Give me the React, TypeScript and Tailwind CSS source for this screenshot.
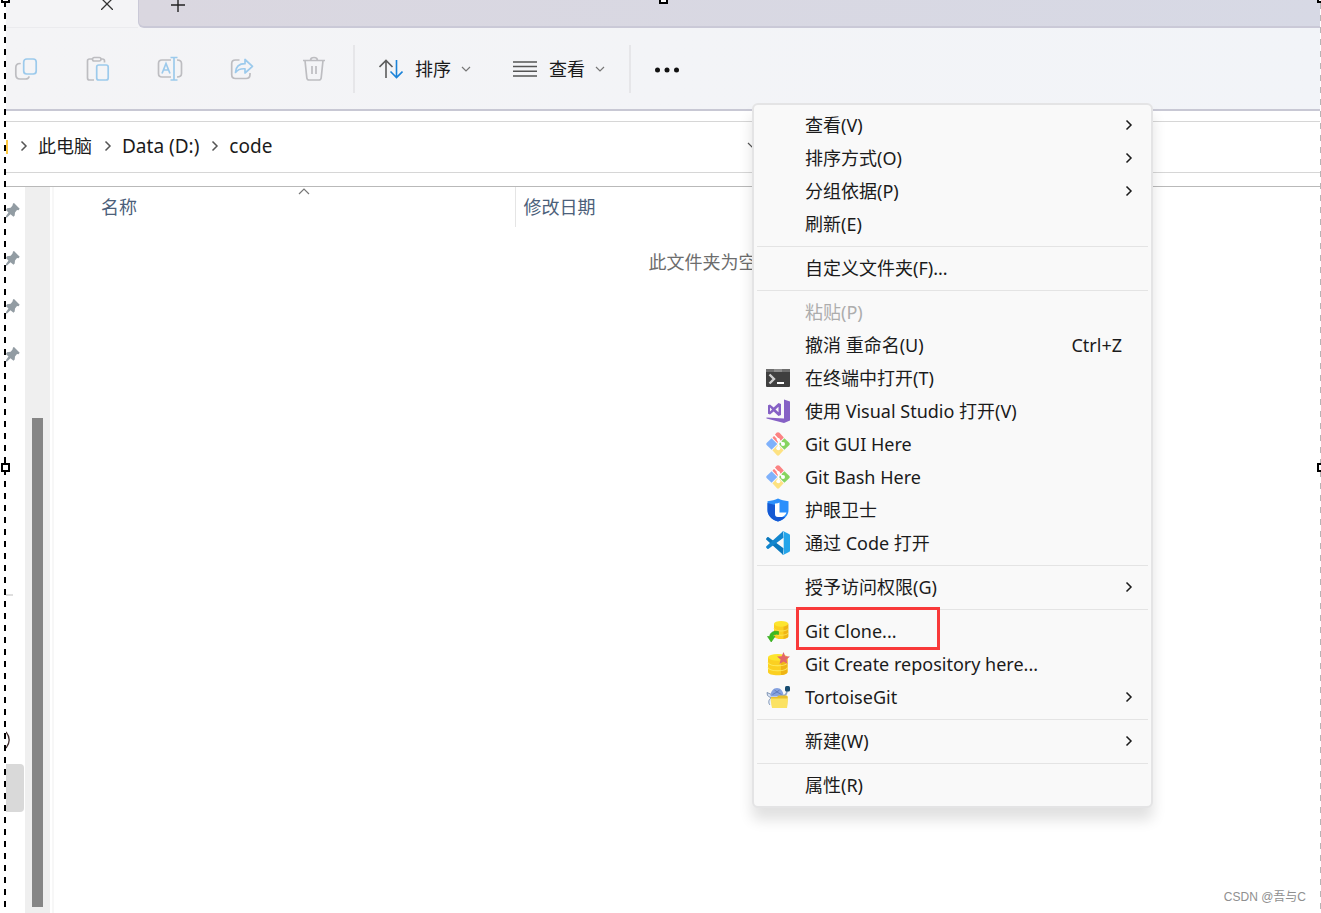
import type { ReactNode } from "react";

type MenuEntry = {
  label?: string;
  icon?: ReactNode;
  shortcut?: string;
  submenu?: boolean;
  disabled?: boolean;
  marked?: boolean;
};

function Chevron({ className }: { className?: string }) {
  return (
    <svg viewBox="0 0 8 12" className={className} fill="none" stroke="currentColor" strokeWidth="1.5">
      <path d="M1.5 1.5 6 6l-4.5 4.5" />
    </svg>
  );
}

function ChevronDown({ className }: { className?: string }) {
  return (
    <svg viewBox="0 0 10 6" className={className} fill="none" stroke="currentColor" strokeWidth="1.2">
      <path d="M1 1l4 4 4-4" />
    </svg>
  );
}

// Toolbar icons
const copyIcon = (
  <svg viewBox="0 0 26 26" className="size-[26px]" fill="none" strokeWidth="1.7" strokeLinecap="round">
    <path d="M7 7.5C4 7.5 2.8 9 2.8 11.500v7C2.800 21.500 4.500 23 7 23h5.500c2 0 3-.6 3.500-2" stroke="#bdbdc1" />
    <rect x="10.7" y="3" width="12.5" height="15" rx="3" stroke="#9ccaec" />
  </svg>
);

const pasteIcon = (
  <svg viewBox="0 0 26 26" className="size-[26px]" fill="none" strokeWidth="1.7">
    <path d="M9 24H4.500c-1.200 0-2-.8-2-2V5c0-1.200.8-2 2-2H7M16 3h1.500c1.200 0 2 .8 2 2v1.500" stroke="#bdbdc1" />
    <rect x="7.500" y="1.5" width="8.500" height="3.5" rx="1.700" stroke="#bdbdc1" />
    <rect x="11.7" y="9" width="11.5" height="15" rx="2" stroke="#9ccaec" />
  </svg>
);

const renameIcon = (
  <svg viewBox="0 0 26 26" className="size-[26px]" fill="none" strokeWidth="1.7">
    <path d="M14 4H5C2.500 4 1.500 5.500 1.500 7.500v10C1.500 19.500 2.500 21 5 21h9M20 4c3 0 4.500 1 4.500 3.500v10C24.500 20 23 21 20 21" stroke="#bdbdc1" />
    <path d="M17 1.500V24M13.500 1.500h7M13.500 24h7M5 17.500l4-10 4 10M6.500 14h5" stroke="#9ccaec" />
  </svg>
);

const shareIcon = (
  <svg viewBox="0 0 26 26" className="size-[26px]" fill="none" strokeWidth="1.7" strokeLinejoin="round">
    <path d="M10.500 4H6.500C4 4 2.700 5.300 2.700 7.500v11c0 2.300 1.300 4 3.800 4H17c2.500 0 4-1.500 4-4V17" stroke="#bdbdc1" />
    <path d="M16 3.500v4.200C10 7.700 6.800 11 6.500 16.500c2.500-3.300 5.500-4 9.500-3.700v4.200l7.500-6.700z" stroke="#9ccaec" />
  </svg>
);

const trashIcon = (
  <svg viewBox="0 0 26 26" className="size-[26px]" fill="none" stroke="#bdbdc1" strokeWidth="1.7">
    <path d="M2 4.500h22M9.500 4.500c0-2 1.300-3 3.500-3s3.500 1 3.500 3M4 4.500l1.800 17.200c.1 1.400 1 2.300 2.400 2.300h9.600c1.400 0 2.300-.9 2.400-2.300L22 4.500M11 10v8M15 10v8" />
  </svg>
);

// Context menu icons
const terminalIcon = (
  <svg viewBox="0 0 24 18" className="h-[18px] w-6">
    <rect width="24" height="18" rx="1" fill="#3f3f3f" />
    <path d="M1 0h22c.6 0 1 .4 1 1v2H0V1c0-.6.4-1 1-1z" fill="#6d6d6d" />
    <path d="M8 0h8v3H8z" fill="#8b8b8b" />
    <path d="M3.500 5.500 8 10l-4.500 4.500" fill="none" stroke="#cfcfcf" strokeWidth="2.4" />
    <path d="M11 14h7" stroke="#fff" strokeWidth="2" />
  </svg>
);

const visualStudioIcon = (
  <svg viewBox="0 0 24 24" className="size-6">
    <path d="M18 .5 24 2.500v19L18 24 .5 19.500v-1l17.500 1z" fill="#8661c5" />
    <path
      d="M12.500 4 15 5v11l-2.500 1-4.800-4.400L4 15.500l-2-.8V6.300l2-.8 3.700 2.900zM4 8.500v4l2-2zm8.500-.7L9.500 10.500l3 2.700z"
      fill="#8661c5"
      fillRule="evenodd"
    />
  </svg>
);

const gitIcon = (
  <svg viewBox="0 0 24 24" className="size-6">
    <path d="M12 .2c.6 0 1 .2 1.500.6l4.300 4.700L12 11.500 6.500 5.700l4-4.900c.5-.4.900-.6 1.500-.6z" fill="#fb8383" />
    <path d="M5.600 6.200 11.300 12l-5.700 5.800L.6 13c-.5-.6-.5-1.400 0-2z" fill="#7fb1fb" />
    <path d="m18.400 6.200 5 4.800c.5.6.5 1.400 0 2l-5 4.800L12.700 12z" fill="#86d45f" />
    <path d="m12 12.700 5.600 5.600-4.300 4.800c-.8.800-1.800.8-2.600 0l-4.300-4.800z" fill="#fde282" />
    <path d="M8 2.800 12.500 7.500V16M12.500 7.500l4.500 4.500" fill="none" stroke="#fff" strokeWidth="1.6" />
    <circle cx="12.300" cy="7.500" r="1.600" fill="#fff" />
    <circle cx="12.300" cy="16.300" r="2" fill="#fff" />
    <circle cx="17" cy="12" r="2" fill="#fff" />
  </svg>
);

const shieldIcon = (
  <svg viewBox="0 0 24 24" className="size-6">
    <path d="M12 .5c3 1.500 6.300 2.300 10.500 2.700V12c0 5.500-4 9.500-10.500 11.500C5.500 21.500 1.500 17.500 1.500 12V3.200C5.700 2.800 9 2 12 .5z" fill="#2b8ffb" />
    <path d="M1.500 5 9 7v9c0 2 1 3 3 3h7.300c-1.800 2-4.300 3.600-7.300 4.500C5.500 21.500 1.500 17.500 1.500 12z" fill="#1559d3" />
    <path d="M9 5.500c1.700.2 3.200-.2 4.500-1V14.500h7c-.8 2.300-2.200 3.800-4.500 4.500h-4c-2 0-3-1-3-3z" fill="#fff" />
  </svg>
);

const vscodeIcon = (
  <svg viewBox="0 0 24 24" className="size-6">
    <path d="M17.500 17.200 2.600 6.300c-.4-.3-.9-.3-1.300 0L.4 7.200c-.5.5-.5 1 0 1.500L17 23.700z" fill="#0a78bd" />
    <path d="M.4 16.800c-.5-.5-.5-1 0-1.500L17 .3l.5 6.500L2.600 17.700c-.4.3-.9.3-1.300 0z" fill="#1286ce" />
    <path d="M17.500.3 23 2.900c.6.3 1 .8 1 1.500v15.200c0 .7-.4 1.200-1 1.500l-5.500 2.600c-.4.2-1 0-1.500-.5 1 .4 1.700 0 1.700-1V1.800c0-1-.7-1.400-1.700-1 .5-.5 1.100-.7 1.500-.5z" fill="#24a5ea" />
  </svg>
);

function Coins() {
  return (
    <>
      <path d="M0 3v13c0 1.700 3.400 3 7.500 3s7.500-1.300 7.500-3V3z" fill="#fbd021" />
      <path d="M10 3v15.800c3-.4 5-1.500 5-2.800V3z" fill="#efb516" />
      <ellipse cx="7.500" cy="3" rx="7.500" ry="3" fill="#fde52e" />
      <path d="M0 7.500c0 1.700 3.400 3 7.500 3s7.500-1.300 7.500-3M0 12c0 1.700 3.400 3 7.500 3s7.500-1.300 7.500-3" fill="none" stroke="#fdec63" strokeWidth=".8" />
    </>
  );
}

const cloneIcon = (
  <svg viewBox="0 0 24 24" className="size-6">
    <g transform="translate(8 2) scale(.95)">
      <Coins />
    </g>
    <path d="M12.500 12.500C7.500 11.500 4 13.500 3.700 17.500H1.500l3.700 5.500L9 17.500H7.200c.2-1.700 2-2.700 5.300-2z" fill="#3dbb1e" stroke="#2fa51a" strokeWidth=".6" />
  </svg>
);

const createIcon = (
  <svg viewBox="0 0 24 24" className="size-6">
    <g transform="translate(2 2) scale(1.3 1.12)">
      <Coins />
    </g>
    <path d="m17.500 0 1.800 4.200 4.700.3-3.600 3 1.200 4.500-4.100-2.500-4 2.500 1.100-4.500-3.600-3 4.700-.3z" fill="#e2666b" />
  </svg>
);

const tortoiseIcon = (
  <svg viewBox="0 0 24 24" className="size-6">
    <path d="M4 20c-2-2-1.500-5.500 1-7L1.500 10.500 1 7.500l4.500 2" fill="#dbe5f5" stroke="#6b84a8" strokeWidth=".8" />
    <path d="M4.500 11.500C4.500 6 7.500 3 11 3s6.500 3 6.500 8.500z" fill="#86a2df" />
    <path d="m8.500 5 2.500 2 2.500-2M6.500 9.500 11 7l4.500 2.500" fill="none" stroke="#5d79ba" strokeWidth=".9" />
    <path d="M17 10.500c3 0 4-2.500 4-5.500" fill="none" stroke="#8fa3c2" strokeWidth="1.6" />
    <rect x="19" y="1" width="5" height="5.5" rx="1.5" fill="#174c70" />
    <path d="M5 12h6l1.500-1.500H20c1 0 1.800.6 1.800 1.600L21 22H6z" fill="#e8bf2b" />
    <path d="M4.500 13.500h17.500L21 23H6z" fill="#fbe262" />
  </svg>
);

const menuGroups: MenuEntry[][] = [
  [
    { label: "查看(V)", submenu: true },
    { label: "排序方式(O)", submenu: true },
    { label: "分组依据(P)", submenu: true },
    { label: "刷新(E)" },
  ],
  [{ label: "自定义文件夹(F)..." }],
  [
    { label: "粘贴(P)", disabled: true },
    { label: "撤消 重命名(U)", shortcut: "Ctrl+Z" },
    { label: "在终端中打开(T)", icon: terminalIcon },
    { label: "使用 Visual Studio 打开(V)", icon: visualStudioIcon },
    { label: "Git GUI Here", icon: gitIcon },
    { label: "Git Bash Here", icon: gitIcon },
    { label: "护眼卫士", icon: shieldIcon },
    { label: "通过 Code 打开", icon: vscodeIcon },
  ],
  [{ label: "授予访问权限(G)", submenu: true }],
  [
    { label: "Git Clone...", icon: cloneIcon, marked: true },
    { label: "Git Create repository here...", icon: createIcon },
    { label: "TortoiseGit", icon: tortoiseIcon, submenu: true },
  ],
  [{ label: "新建(W)", submenu: true }],
  [{ label: "属性(R)" }],
];

const tools = [
  { name: "复制", icon: copyIcon },
  { name: "粘贴", icon: pasteIcon },
  { name: "重命名", icon: renameIcon },
  { name: "共享", icon: shareIcon },
  { name: "删除", icon: trashIcon },
];

function MenuItem({ label, icon, shortcut, submenu, disabled, marked }: MenuEntry) {
  return (
    <button
      type="button"
      role="menuitem"
      disabled={disabled}
      className="relative flex h-[33px] w-full items-center pb-0.5 pl-3 pr-[18px] text-left text-[#1b1b1b] disabled:text-[#adadad]"
    >
      <span className="mr-[15px] flex w-6 shrink-0 justify-center">{icon}</span>
      <span className="flex-1 whitespace-nowrap">{label}</span>
      {shortcut && <span className="mr-[11px]">{shortcut}</span>}
      {submenu && <Chevron className="h-3 w-2" />}
      {marked && <span className="absolute -top-2 left-[42px] h-[43px] w-36 border-3 border-[#f93a3a]" />}
    </button>
  );
}

function ContextMenu() {
  return (
    <div
      role="menu"
      className="absolute left-[752px] top-[103px] w-[401px] rounded-md border-2 border-[#e4e4e5] bg-[#f9f9f9] py-1 shadow-[0_12px_14px_rgba(0,0,0,0.12)]"
    >
      {menuGroups.map((group, i) => (
        <div key={i}>
          {i > 0 && <hr className="mx-[3px] my-[5px] border-t border-[#e4e4e4]" />}
          {group.map((entry) => (
            <MenuItem key={entry.label} {...entry} />
          ))}
        </div>
      ))}
    </div>
  );
}

function TabBar() {
  return (
    <div className="flex h-7 bg-[#f4f4f6]">
      <div className="flex w-[132px] items-start justify-end border-b border-[#ebebee] pr-[25px]">
        <button type="button" aria-label="关闭标签页">
          <svg viewBox="0 2 12 10" className="h-2.5 w-3" fill="none" stroke="#333" strokeWidth="1.3">
            <path d="M0 0l12 12M12 0 0 12" />
          </svg>
        </button>
      </div>
      <div className="flex flex-1 items-start rounded-bl-md border-b-2 border-l border-[#cac9d7] bg-linear-to-r from-[#dad7e0] to-[#d7d9e5] pl-8">
        <button type="button" aria-label="新建标签页">
          <svg viewBox="0 2 14 12" className="h-3 w-3.5" fill="none" stroke="#222" strokeWidth="1.4">
            <path d="M7 0v14M0 7h14" />
          </svg>
        </button>
      </div>
    </div>
  );
}

function Toolbar() {
  return (
    <div className="flex h-[83px] items-center border-b-2 border-[#c8c8d4] bg-linear-to-r from-[#f4f4f6] to-[#f2f4f8]">
      <div className="flex gap-8">
        {tools.map((tool) => (
          <button key={tool.name} type="button" aria-label={tool.name} className="flex h-10 w-10 items-center justify-center">
            {tool.icon}
          </button>
        ))}
      </div>
      <span className="ml-[19px] h-12 w-0.5 bg-[#e6e6e9]" />
      <button type="button" className="ml-6 flex items-center text-[#1b1b1b]">
        <svg viewBox="0 0 24 20" className="mr-3 h-5 w-6" fill="none" strokeWidth="1.6">
          <path d="M7 19V1.500M.5 8 7 1.500 13.500 8" stroke="#5c5c5c" />
          <path d="M17.500 1v17.500M11.500 12.500l6 6 6-6" stroke="#1a82d8" />
        </svg>
        排序
        <ChevronDown className="ml-2.5 h-1.5 w-2.5 text-[#777]" />
      </button>
      <button type="button" className="ml-[42px] flex items-center text-[#1b1b1b]">
        <svg viewBox="0 0 24 16" className="mr-3 h-4 w-6" stroke="#555" strokeWidth="1.5">
          <path d="M0 1h24M0 5.600h24M0 10.300h24M0 15h24" />
        </svg>
        查看
        <ChevronDown className="ml-2.5 h-1.5 w-2.5 text-[#777]" />
      </button>
      <span className="ml-6 h-12 w-0.5 bg-[#e6e6e9]" />
      <button type="button" aria-label="更多" className="ml-6 pt-0.5">
        <svg viewBox="0 0 26 6" className="h-1.5 w-[26px]" fill="#111">
          <circle cx="2.5" cy="3" r="2.500" />
          <circle cx="12" cy="3" r="2.500" />
          <circle cx="21.5" cy="3" r="2.500" />
        </svg>
      </button>
    </div>
  );
}

function AddressBar() {
  return (
    <div className="mt-2.5 flex h-[52px] items-center overflow-hidden border-y border-[#d6d6d6] text-[#1b1b1b]">
      <span className="h-3.5 w-0.5 shrink-0 bg-[#ffc83d]" />
      <nav aria-label="路径" className="flex w-[739px] shrink-0 items-center pb-0.5 text-[19px]">
        <Chevron className="ml-3 h-3 w-2 text-[#555]" />
        <a href="#pc" className="ml-2.5 text-lg">此电脑</a>
        <Chevron className="ml-3 h-3 w-2 text-[#555]" />
        <a href="#data" className="ml-2.5">Data (D:)</a>
        <Chevron className="ml-3 h-3 w-2 text-[#555]" />
        <a href="#code" className="ml-2.5">code</a>
      </nav>
      <ChevronDown className="mb-1 h-1.5 w-2.5 shrink-0 text-[#555]" />
    </div>
  );
}

function Sidebar() {
  return (
    <aside className="flex w-[19px] shrink-0 flex-col overflow-hidden">
      {[0, 1, 2, 3].map((n) => (
        <span key={n} className="flex h-12 items-center pb-0.5">
          <svg viewBox="0 0 14 16" className="h-4 w-3.5" fill="#929ca3">
            <path d="M8 1 13.700 6.800l-1.200 1.400-1.500-.2-2 2.500-.3 3-1.200 1.200-3-2.500L1 15.500H0v-1.500l2.500-3.500L0 8l1-1.700 3.700-.5L6.500 3.500 7 1.500z" />
          </svg>
        </span>
      ))}
      <hr className="mt-[215px] w-[7px] border-t-2 border-[#dedede]" />
      <span className="mt-[120px] flex h-12 items-center">
        <svg viewBox="0 0 4 18" className="h-[18px] w-1" fill="none" stroke="#3d2a2a" strokeWidth="1.3">
          <path d="M0 1c4 5 4 11 0 16" />
        </svg>
      </span>
      <span className="h-12 w-[18px] rounded-r-sm bg-[#d9d9d9]" />
    </aside>
  );
}

function FileList() {
  return (
    <main className="flex-1 border-l-2 border-[#f7f7f7]">
      <table className="w-full table-fixed">
        <thead>
          <tr className="h-10 text-left align-top text-[#4c607a]">
            <th className="relative w-[461px] border-r border-[#e5e5e5] pl-[47px] pt-1.5 font-normal">
              名称
              <svg viewBox="0 0 12 7" className="absolute left-[244px] top-px h-[7px] w-3" fill="none" stroke="#777" strokeWidth="1.2">
                <path d="M1 6l5-5 5 5" />
              </svg>
            </th>
            <th className="pl-2 pt-1.5 font-normal">修改日期</th>
          </tr>
        </thead>
        <tbody>
          <tr>
            <td colSpan={2} className="pl-12 pt-[21px] text-center text-[#6d6d6d]">
              此文件夹为空。
            </td>
          </tr>
        </tbody>
      </table>
    </main>
  );
}

// Marching-ants frame with its resize handles
function SelectionFrame() {
  return (
    <div className="pointer-events-none absolute inset-0 overflow-hidden">
      <span className="absolute bottom-0 left-1 top-0 w-0.5 bg-[repeating-linear-gradient(to_bottom,#fff_0_1px,#000_1px_7px,#fff_7px_12px)]" />
      <span className="absolute bottom-0 right-0 top-0 w-px bg-[repeating-linear-gradient(to_bottom,#fff_0_3px,#b5b5b5_3px_9px,#fff_9px_12px)]" />
      <span className="absolute -top-1.5 left-px size-[9px] border-2 border-black bg-white" />
      <span className="absolute -top-[5px] left-[659px] size-[9px] border-2 border-black bg-white" />
      <span className="absolute -right-[5px] -top-1.5 size-[9px] border-2 border-black bg-white" />
      <span className="absolute left-px top-[463px] size-[9px] border-2 border-black bg-white" />
      <span className="absolute -right-[5px] top-[463px] size-[9px] border-2 border-black bg-white" />
    </div>
  );
}

export default function App() {
  return (
    <div className="relative flex min-h-screen flex-col overflow-hidden bg-white pl-1.5 font-['Noto_Sans','Noto_Sans_CJK_SC',sans-serif] text-lg leading-7">
      <TabBar />
      <Toolbar />
      <AddressBar />
      <div className="mt-[13px] flex flex-1 border-t border-[#b9b9b9]">
        <Sidebar />
        <div className="mr-0.5 flex w-[25px] shrink-0 flex-col items-center bg-[#efefef] pb-1.5 pt-[231px]">
          <span className="w-[11px] flex-1 bg-[#868686]" />
        </div>
        <FileList />
      </div>
      <ContextMenu />
      <SelectionFrame />
      <span className="absolute bottom-1.5 right-[15px] font-['Liberation_Sans','Noto_Sans_CJK_SC',sans-serif] text-xs leading-5 text-[#8f8f8f]">
        CSDN @吾与C
      </span>
    </div>
  );
}
